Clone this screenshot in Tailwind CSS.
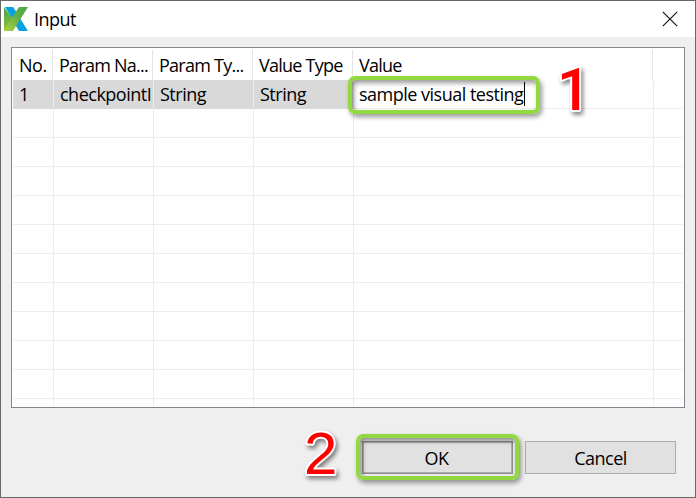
<!DOCTYPE html>
<html lang="en">
<head>
<meta charset="utf-8">
<title>Input</title>
<script src="https://cdn.jsdelivr.net/npm/@tailwindcss/browser@4"></script>
</head>
<body class="w-[696px] h-[498px] overflow-hidden bg-[#efefef] text-black font-['Open_Sans','Noto_Sans',sans-serif] text-[18px] tracking-[-0.5px]">
<div class="relative flex h-[498px] w-[696px] flex-col border border-[#676767]">
  <header class="flex h-9 shrink-0 items-center bg-white pl-[3px] pr-[17px]">
    <svg class="h-6 w-6 shrink-0" viewBox="0 0 24 24">
      <defs>
        <linearGradient id="g" x1="1" y1="0" x2="0" y2="1"><stop offset="0" stop-color="#49a54a"/><stop offset=".45" stop-color="#67b148"/><stop offset="1" stop-color="#b2d43c"/></linearGradient>
        <linearGradient id="s" x1="0" y1="0" x2="0" y2="1"><stop offset="0" stop-color="#43a047"/><stop offset="1" stop-color="#8fc640"/></linearGradient>
      </defs>
      <path d="M1 0H9L24 24H15Z" fill="#08a2dc"/>
      <path d="M0 0L8 11.500L0 24Z" fill="url(#s)"/>
      <path d="M3 0H9L12.500 5.500L8.500 11Z" fill="#08a2dc"/>
      <path d="M15 0H24L9 24H0V22.500Z" fill="url(#g)"/>
    </svg>
    <h1 class="ml-[6px] grow leading-6 tracking-[-0.5px]">Input</h1>
    <svg class="h-4 w-4 shrink-0" viewBox="0 0 16 16"><path d="M.8.8L15.2 15.2M15.2.8L.8 15.2" stroke="#111" stroke-width="1.15"/></svg>
  </header>
  <main class="mx-[10px] mt-[10px] flex h-[361px] shrink-0 flex-col border border-[#828790] bg-white p-px">
    <div class="grid h-[31px] shrink-0 grid-cols-[40px_100px_100px_100px_300px_1fr] pt-px leading-[31px] whitespace-nowrap tracking-[-0.75px]">
      <div class="border-r border-[#e5e5e5] pl-[6px] tracking-[-0.5px]">No.</div>
      <div class="border-r border-[#e5e5e5] pl-[6px]">Param Na...</div>
      <div class="border-r border-[#e5e5e5] pl-[6px]">Param Ty...</div>
      <div class="border-r border-[#e5e5e5] pl-[6px]">Value Type</div>
      <div class="border-r border-[#e5e5e5] pl-[6px]">Value</div>
    </div>
    <div class="grid h-[29px] shrink-0 grid-cols-[41px_100px_100px_100px_300px_1fr] border-b border-[#ededed] leading-[29px] whitespace-nowrap">
      <div class="border-r border-[#ededed] bg-[#d9d9d9] pl-[6px]">1</div>
      <div class="border-r border-[#ededed] bg-[#d9d9d9] pl-[6px]">checkpointI</div>
      <div class="border-r border-[#ededed] bg-[#d9d9d9] pl-[6px]">String</div>
      <div class="border-r border-[#ededed] bg-[#d9d9d9] pl-[6px]">String</div>
      <div class="flex items-center border-r border-[#ededed] pb-[2px] pl-[5px]"><span class="leading-6">sample visual testing</span><span class="ml-px h-6 w-px bg-black"></span></div>
    </div>
    <div id="rows" class="grow overflow-hidden"></div>
  </main>
  <footer class="mt-[33px] flex h-[33px] shrink-0 justify-end gap-3 pr-[19px]">
    <button class="w-[151px] border border-[#8d8d8d] bg-[#e1e1e1] pt-[2px] pr-[2px] shadow-[inset_0_0_0_1px_#adadad]">OK</button>
    <button class="w-[151px] border border-[#adadad] bg-[#e1e1e1] pt-[2px]">Cancel</button>
  </footer>
  <div class="absolute left-[347px] top-[75px] h-[38px] w-[192px] rounded-[7px] border-4 border-[#92d841] shadow-[2px_3px_5px_#0006,inset_2px_3px_5px_#0006]"></div>
  <div class="absolute left-[355px] top-[433px] h-[46px] w-[163px] rounded-[7px] border-4 border-[#92d841] shadow-[2px_3px_5px_#0006,inset_2px_3px_5px_#0006]"></div>
  <svg class="absolute left-[545px] top-[55px] h-[66px] w-[50px] overflow-visible drop-shadow-[2px_3px_2px_#0007]"><text x="11" y="54" font-family="Roboto" font-size="59" font-weight="500" fill="#fe0000" stroke="#fff" stroke-width="4" stroke-linejoin="round" paint-order="stroke" letter-spacing="0">1</text></svg>
  <svg class="absolute left-[295px] top-[419px] h-[66px] w-[50px] overflow-visible drop-shadow-[2px_3px_2px_#0007]"><text x="8" y="54" font-family="Liberation Sans" font-size="60" fill="#fe0000" stroke="#fff" stroke-width="4" stroke-linejoin="round" paint-order="stroke" letter-spacing="0">2</text></svg>
</div>
<script>
  const cell = '<div class="border-r border-[#ededed]"></div>';
  document.getElementById('rows').innerHTML = Array(11).fill('<div class="grid h-[29px] grid-cols-[41px_100px_100px_100px_300px_1fr] border-b border-[#ededed]">' + cell.repeat(5) + '</div>').join('');
</script>
</body>
</html>
